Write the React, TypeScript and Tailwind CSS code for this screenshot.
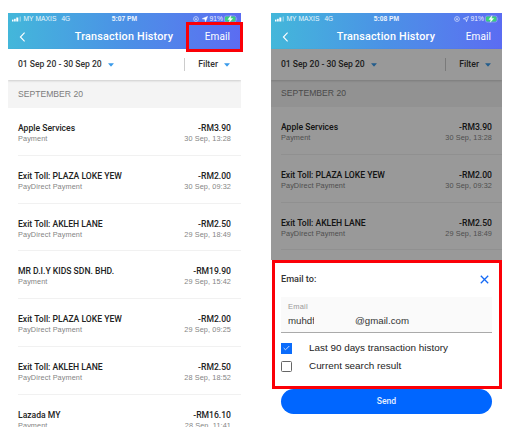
import React from "react";

type Tx = { title: string; sub: string; amount: string; date: string };

const transactions: Tx[] = [
  { title: "Apple Services", sub: "Payment", amount: "-RM3.90", date: "30 Sep, 13:28" },
  { title: "Exit Toll: PLAZA LOKE YEW", sub: "PayDirect Payment", amount: "-RM2.00", date: "30 Sep, 09:32" },
  { title: "Exit Toll: AKLEH LANE", sub: "PayDirect Payment", amount: "-RM2.50", date: "29 Sep, 18:49" },
  { title: "MR D.I.Y KIDS SDN. BHD.", sub: "Payment", amount: "-RM19.90", date: "29 Sep, 15:42" },
  { title: "Exit Toll: PLAZA LOKE YEW", sub: "PayDirect Payment", amount: "-RM2.00", date: "29 Sep, 09:25" },
  { title: "Exit Toll: AKLEH LANE", sub: "PayDirect Payment", amount: "-RM2.50", date: "28 Sep, 18:52" },
  { title: "Lazada MY", sub: "Payment", amount: "-RM16.10", date: "28 Sep, 11:41" },
];

function Signal() {
  return (
    <svg width="10" height="6" viewBox="0 0 10 6" fill="#fff" className="shrink-0">
      <rect x="0" y="3.6" width="1.5" height="1.9" />
      <rect x="2.1" y="2.8" width="1.6" height="2.7" />
      <rect x="4.3" y="1.5" width="2" height="4" />
      <rect x="7.6" y="0.5" width="1.2" height="5" opacity="0.45" />
    </svg>
  );
}

function StatusIcons({ outline }: { outline?: boolean }) {
  return (
    <>
      <svg width="6" height="6" viewBox="0 0 6 6" fill="none" stroke="#fff" strokeWidth="0.7" className="shrink-0 opacity-80">
        <circle cx="3" cy="3" r="2.4" />
        <circle cx="3" cy="3.1" r="0.9" fill="#fff" stroke="none" />
      </svg>
      <svg width="6" height="6" viewBox="0 0 6 6" className="ml-[3px] shrink-0">
        <path d="M5.5 0.5 L3.5 5.6 L2.9 3.1 L0.4 2.7 Z" fill={outline ? "none" : "#fff"} stroke="#fff" strokeWidth="0.6" strokeLinejoin="round" />
      </svg>
    </>
  );
}

function Battery() {
  return (
    <svg width="14" height="8" viewBox="0 0 14 8" className="ml-px shrink-0">
      <rect x="0.4" y="1" width="11.6" height="6" rx="1.7" fill="none" stroke="#fff" strokeOpacity="0.5" strokeWidth="0.6" />
      <rect x="1" y="1.5" width="10.4" height="5" rx="1.1" fill="#39cf7c" />
      <path d="M12.7 2.9 Q13.8 4 12.7 5.1 Z" fill="#fff" fillOpacity="0.5" />
      <path d="M7 0.6 L3.9 4.4 H5.9 L5.3 7.3 L8.7 3.5 H6.5 Z" fill="#fff" stroke="#fff" strokeWidth="0.4" />
    </svg>
  );
}

function Caret() {
  return (
    <svg width="6" height="4" viewBox="0 0 6 4" className="shrink-0">
      <path d="M0.5 0.3 H5.5 Q5.9 0.4 5.6 0.8 L3.4 3.2 Q3 3.6 2.6 3.2 L0.4 0.8 Q0.1 0.4 0.5 0.3 Z" fill="#3b9bea" />
    </svg>
  );
}

function Header({ time, outline }: { time: string; outline?: boolean }) {
  return (
    <header className="h-9 shrink-0 bg-linear-to-r from-[#43b7da] via-[#4b91e6] to-[#5b6cf2] text-white">
      <div className="relative flex h-3 items-center pr-[3px] pl-[3.5px] text-[6.7px] leading-3 text-white/90">
        <Signal />
        <span className="ml-[2px] text-[6.7px] tracking-[0.05px]">MY MAXIS</span>
        <span className="ml-[5px] text-[6.5px]">4G</span>
        <span className="absolute inset-x-0 text-center text-[6.7px] font-bold">{time}</span>
        <div className="ml-auto flex items-center">
          <StatusIcons outline={outline} />
          <span className="ml-[2px]">91%</span>
          <Battery />
        </div>
      </div>
      <div className="flex h-6 items-center pr-[11px] pl-[11px]">
        <span className="w-[31px] shrink-0">
          <svg width="7" height="10" viewBox="0 0 7 10" fill="none" stroke="#fff" strokeWidth="1.1">
            <path d="M5.6 0.7 L1.4 5 L5.6 9.3" />
          </svg>
        </span>
        <h1 className="grow pr-px text-center font-['Roboto',sans-serif] text-[10.8px] leading-6 font-medium tracking-[0.2px] whitespace-nowrap">Transaction History</h1>
        <span className="w-[31px] text-right font-['Roboto',sans-serif] text-[10px] leading-6 tracking-[0.1px]">Email</span>
      </div>
    </header>
  );
}

function FilterBar() {
  return (
    <div className="relative z-10 flex h-[31px] shrink-0 items-center bg-white pr-[11px] pl-[10px] font-['Roboto',sans-serif] text-[8.7px] font-medium text-[#333] shadow-[0_1px_2px_rgba(0,0,0,0.16)]">
      <span className="text-[8.6px] tracking-[-0.02px]">01 Sep 20 - 30 Sep 20</span>
      <span className="ml-[6px] flex"><Caret /></span>
      <span className="ml-auto h-[13px] w-px bg-[#ccc]" />
      <span className="mr-[6px] ml-[13px]">Filter</span>
      <Caret />
    </div>
  );
}

function Row({ tx }: { tx: Tx }) {
  return (
    <div className="ml-[10px] flex h-[47.8px] shrink-0 items-start justify-between border-b border-[#f1f1f1] pt-[14px] pr-[10px]">
      <div>
        <p className="font-['Roboto',sans-serif] text-[8.6px] leading-3 font-medium text-[#222]">{tx.title}</p>
        <p className="text-[7.3px] leading-[10px] tracking-[0.1px] text-[#858585]">{tx.sub}</p>
      </div>
      <div className="text-right">
        <p className="font-['Roboto',sans-serif] text-[8.6px] leading-3 font-medium text-[#222]">{tx.amount}</p>
        <p className="text-[7.3px] leading-[10px] tracking-[0.1px] text-[#858585]">{tx.date}</p>
      </div>
    </div>
  );
}

function EmailSheet() {
  return (
    <section className="absolute inset-x-0 top-[247px] h-[167px] bg-white px-[10px]">
      <div className="flex h-[37px] items-center justify-between pt-[2px] pr-[3px]">
        <h2 className="font-['Roboto',sans-serif] text-[9.1px] font-medium text-[#333]">Email to:</h2>
        <svg width="9" height="9" viewBox="0 0 9 9" stroke="#1469f5" strokeWidth="1.3" fill="none">
          <path d="M0.8 0.8 L8.2 8.2 M8.2 0.8 L0.8 8.2" />
        </svg>
      </div>
      <div className="h-[36px] border-b border-[#aaa] bg-[#fafafa] pt-[5px] pl-[7px]">
        <p className="text-[7.5px] leading-[10px] tracking-[0.2px] text-[#999]">Email</p>
        <p className="flex text-[9.7px] leading-[17px] text-[#333]">
          <span className="w-[26px] overflow-hidden">muhdf</span>
          <span className="ml-[41px]">@gmail.com</span>
        </p>
      </div>
      <div className="mt-[6px] flex h-[18.5px] items-center text-[9.9px] text-[#222]">
        <span className="flex size-[11px] items-center justify-center bg-[#0b6cfb]">
          <svg width="7" height="6" viewBox="0 0 7 6" fill="none" stroke="#d9e8ff" strokeWidth="0.9">
            <path d="M0.7 3 L2.5 4.8 L6.3 1" />
          </svg>
        </span>
        <span className="ml-[17px] whitespace-nowrap">Last 90 days transaction history</span>
      </div>
      <div className="flex h-[18.5px] items-center text-[9.9px] text-[#222]">
        <span className="size-[11px] rounded-[1.5px] border border-[#666]" />
        <span className="ml-[17px] whitespace-nowrap">Current search result</span>
      </div>
      <button className="mt-[13px] block h-[25px] w-full rounded-full bg-[#0066ff] font-['Roboto',sans-serif] text-[8.6px] font-medium text-white/90">
        Send
      </button>
    </section>
  );
}

function Phone({ time, width, rows, sheet }: { time: string; width: number; rows: Tx[]; sheet?: boolean }) {
  return (
    <div className="relative flex h-[414px] shrink-0 flex-col overflow-hidden bg-white" style={{ width }}>
      <Header time={time} outline={sheet} />
      <FilterBar />
      <div className={sheet ? "h-[27px] shrink-0 bg-[#f4f4f4] pl-[10px] text-[8.6px] leading-[27px] text-[#7c7c7c]" : "h-[28px] shrink-0 bg-[#f4f4f4] pl-[10px] text-[8.6px] leading-[28px] text-[#7c7c7c]"}>
        SEPTEMBER 20
      </div>
      {rows.map((tx, i) => (
        <Row key={i} tx={tx} />
      ))}
      {sheet && (
        <>
          <div className="absolute inset-x-0 top-9 bottom-0 z-20 bg-black/40" />
          <div className="absolute inset-0 z-30">
            <EmailSheet />
            <div className="absolute top-[247px] right-0 left-px h-[129px] border-[3px] border-[#fb0007]" />
          </div>
        </>
      )}
    </div>
  );
}

export default function App() {
  return (
    <main className="flex h-[445px] w-[519px] items-start gap-[30px] overflow-hidden bg-white pt-[13px] pl-2 font-['Liberation_Sans',Arial,sans-serif]">
      <div className="relative">
        <Phone time="5:07 PM" width={233} rows={transactions} />
        <div className="absolute top-[9px] left-[178px] z-20 h-[30px] w-[57px] border-[3px] border-[#fb0007]" />
      </div>
      <Phone time="5:08 PM" width={231} rows={transactions.slice(0, 3)} sheet />
    </main>
  );
}
